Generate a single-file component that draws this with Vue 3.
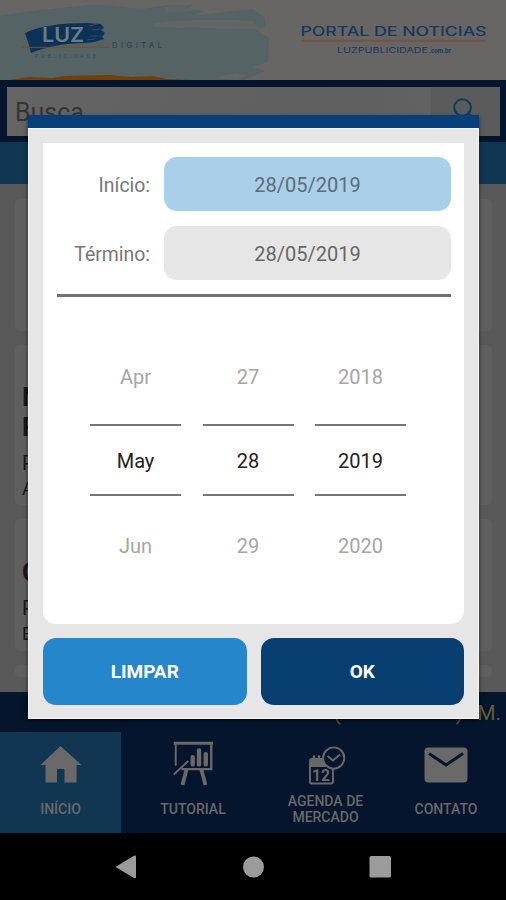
<script setup>
const columns = [
  ['Apr', 'May', 'Jun'],
  ['27', '28', '29'],
  ['2018', '2019', '2020'],
]
</script>

<template>
  <div class="screen">
    <header class="banner">
      <svg width="506" height="80" viewBox="0 0 506 80">
        <rect width="506" height="80" fill="#676665" />
        <path d="M0 16 C30 10 65 8 88 5 C110 4 128 8 143 9 L166 5 L193 5 L187 9 L205 11 L192 16 L231 11 L253 9 L265 18 L266 27 L255 29 L269 38 L268 62 L253 67 L265 71 L244 80 H0Z" fill="#556365" />
        <path d="M152 24 C180 19 224 19 253 21 L260 29 C230 30 203 27 181 28 L154 27Z M214 78 L235 73 L247 75 L238 80Z" fill="#626665" />
        <path d="M165 7 L190 5 L185 8 L204 10 L165 13Z" fill="#5e6565" />
        <path d="M9 80 L29 77 L52 78 L65 76 L110 75 L132 77 L152 76 L166 79 L190 80Z" fill="#733f09" />
        <path d="M25 33 C39 26 62 23 86 23 L101 24 L104 28 L101 30 L105 33 L102 37 L104 39 L95 42 L85 43 C65 43 45 47 31 53 L29 45Z" fill="#0c3357" />
        <path d="M89 26 L98 24 M92 30 L104 29 M90 36 L101 36 M87 40 L95 39" stroke="#38536a" stroke-width=".7" />
        <path d="M22 47.3 H110" stroke="#74502d" stroke-width="1" />
        <text x="42" y="42" textLength="42" lengthAdjust="spacingAndGlyphs" class="luz">LUZ</text>
        <text x="35" y="58" textLength="61" class="publi">PUBLICIDADE</text>
        <text x="112" y="48" textLength="50" class="digital">DIGITAL</text>
        <text x="300.5" y="36" textLength="186" lengthAdjust="spacingAndGlyphs" class="portal">PORTAL DE NOTICIAS</text>
        <path d="M301 40.8 H486" stroke="#76533f" stroke-width="2" />
        <text x="337" y="53" textLength="91" lengthAdjust="spacingAndGlyphs" class="site">LUZPUBLICIDADE</text>
        <text x="429" y="53" textLength="22" lengthAdjust="spacingAndGlyphs" class="site small">.com.br</text>
      </svg>
    </header>
    <div class="search">
      <div class="field">
        <span class="placeholder">Busca</span>
        <span class="go">
          <svg width="28" height="28" viewBox="0 0 28 28" fill="none" stroke="#0c3b5e" stroke-width="2">
            <circle cx="11.5" cy="11.5" r="8.3" /><path d="M17.5 17.5 L25 25" />
          </svg>
        </span>
      </div>
    </div>
    <div class="band"></div>
    <main class="feed">
      <article class="card first"></article>
      <article class="card second"><b>N</b><b>P</b><span>P</span><small>A</small></article>
      <article class="card third"><b>C</b><span>P</span><small>E</small></article>
      <article class="card fourth"></article>
    </main>
    <div class="ticker"><span>(</span><span>)</span><span>M.</span></div>
    <nav class="tabs">
      <div class="tab active">
        <svg width="44" height="48" viewBox="0 0 44 48" fill="#696969">
          <path d="M21.5 8 L42.5 27 H37.5 V44.5 H25.5 V31 H18 V44.5 H6.5 V27 H1.5Z" />
        </svg>
        <span>INÍCIO</span>
      </div>
      <div class="tab">
        <svg width="44" height="50" viewBox="0 0 44 50" fill="none" stroke="#696969" stroke-width="2">
          <path d="M2 5.5 H43" stroke-width="3.2" />
          <path d="M4 6 V29 M2 38 L17 24" stroke-width="2" />
          <path d="M10 32.5 H41 V6" stroke-width="2.4" />
          <path d="M15.5 32 L11 49 M30.5 32 L35 49" stroke-width="4" />
          <path d="M21.7 27.5 V20 M28.3 27.5 V13 M35.3 27.5 V17" stroke-width="4.6" stroke-linecap="round" />
        </svg>
        <span>TUTORIAL</span>
      </div>
      <div class="tab">
        <svg width="44" height="48" viewBox="0 0 44 48" fill="none" stroke="#696969" stroke-width="1.9">
          <path d="M29 31 V43.5 Q29 45.5 27 45.5 H8 Q6 45.5 6 43.5 V23 Q6 21 8 21 H19" />
          <path d="M6 21 H18.5 Q19.5 27 24 29 H6Z" fill="#696969" stroke="none" />
          <path d="M10 22 V18.5 M15 22 V18.5" stroke-width="2.5" stroke-linecap="round" />
          <circle cx="29.7" cy="20" r="10.6" />
          <path d="M23.5 18 L29 22.5 L36 16.5" stroke-width="2" />
          <text x="8" y="43" textLength="18" lengthAdjust="spacingAndGlyphs" class="day">12</text>
        </svg>
        <span>AGENDA DE<br>MERCADO</span>
      </div>
      <div class="tab">
        <svg width="44" height="48" viewBox="0 0 44 48">
          <rect x=".5" y="9.5" width="43" height="35" rx="4" fill="#696969" />
          <path d="M5 15.5 L22 27 L39 15.5" fill="none" stroke="#04152d" stroke-width="3" />
        </svg>
        <span>CONTATO</span>
      </div>
    </nav>
    <footer class="system">
      <svg width="506" height="67" viewBox="0 0 506 67" fill="#9b9b9b">
        <path d="M115.5 34 L134 22.8 Q136 22 136 24 V44 Q136 46 134 45Z" />
        <circle cx="253.5" cy="34" r="10.5" />
        <rect x="369.5" y="23" width="21.5" height="21.5" rx="1.5" />
      </svg>
    </footer>

    <section class="dialog">
      <div class="content">
        <div class="panel">
          <div class="row"><label>Início:</label><div class="date selected">28/05/2019</div></div>
          <div class="row"><label>Término:</label><div class="date">28/05/2019</div></div>
          <div class="rule"></div>
          <div class="picker">
            <div v-for="column in columns" :key="column[1]" class="column">
              <span>{{ column[0] }}</span>
              <span class="current">{{ column[1] }}</span>
              <span>{{ column[2] }}</span>
            </div>
          </div>
        </div>
        <div class="actions">
          <button class="clear">LIMPAR</button>
          <button class="ok">OK</button>
        </div>
      </div>
    </section>
  </div>
</template>

<style>
body { margin: 0; background: #000; }
</style>

<style scoped>
* { box-sizing: border-box; }
.screen { position: relative; width: 506px; height: 900px; overflow: hidden; font-family: Roboto, sans-serif; }
svg { display: block; }
.banner { height: 80px; }
.luz { font: 600 20px Inter, sans-serif; fill: #6e7c87; }
.publi { font: 5px Inter, sans-serif; fill: #344c5d; }
.digital { font: 7.5px Inter, sans-serif; fill: #213d57; }
.portal { font: 500 12.5px Inter, sans-serif; fill: #17375b; }
.site { font: 7.5px Inter, sans-serif; fill: #17375b; }
.small { font-size: 6px; font-weight: 700; }
.search { height: 62px; padding: 7px 6px 6px 7px; background: #04152d; }
.field { height: 49px; display: flex; justify-content: space-between; background: linear-gradient(90deg, #646464, #5f5f5f 70%, #666); }
.placeholder { padding: 12px 0 0 8px; font-size: 25px; line-height: 28px; color: #343434; }
.go { width: 69px; padding: 9px 0 0 20px; background: #5b5b5b; }
.band { height: 42px; background: #103651; }
.feed { height: 508px; padding: 15px 14px 0 15px; background: #595959; overflow: hidden; display: flex; flex-direction: column; gap: 14px; }
.card { flex: none; border-radius: 5px; background: #5f5f5f; padding-left: 7px; display: flex; flex-direction: column; color: #191919; }
.card b { font-size: 26px; line-height: 30px; }
.card span { font-size: 20px; line-height: 25px; }
.card small { font-size: 18px; line-height: 25px; }
.first { height: 132px; }
.second { height: 160px; padding-top: 37px; }
.second span { margin-top: 9px; }
.third { height: 132px; padding-top: 38px; }
.third span { margin-top: 9px; }
.fourth { height: 12px; }
.ticker { height: 40px; padding: 9px 5px 0 0; display: flex; justify-content: flex-end; background: #04152d; color: #625d38; font-size: 21px; line-height: 25px; }
.ticker span:first-child { margin-right: 115px; }
.ticker span:nth-child(2) { margin-right: 14px; }
.tabs { height: 101px; display: grid; grid-template-columns: 121px 144px 121px 120px; background: #04152d; }
.tab { padding-top: 6px; display: flex; flex-direction: column; align-items: center; text-align: center; color: #696969; font-size: 14px; font-weight: 500; line-height: 16px; }
.tab svg { height: 48px; flex: none; overflow: visible; }
.tab span { height: 45px; display: flex; align-items: center; }
.active { background: #103651; }
.day { font: 700 17px Roboto, sans-serif; fill: #696969; stroke: none; }
.system { height: 67px; background: #000; }
.dialog { position: absolute; left: 28px; top: 115px; width: 451px; height: 604px; border-top: 13px solid #063f79; background: #e6e6e6; box-shadow: 0 2px 4px #0009; }
.content { height: 591px; border: 1px solid #f3f3f3; padding: 14px 14px 13px; display: flex; flex-direction: column; gap: 14px; }
.panel { height: 481px; flex: none; padding: 14px 13px 0 14px; border-radius: 0 0 13px 13px; background: #fff; }
.row { height: 54px; display: flex; align-items: center; gap: 14px; margin-bottom: 15px; color: #777; }
.row label { width: 93px; padding-top: 2px; text-align: right; white-space: nowrap; font-size: 19.4px; }
.date { flex: 1; height: 54px; padding-top: 2px; border-radius: 13px; background: #e6e6e6; display: flex; align-items: center; justify-content: center; color: #666; font-size: 20px; }
.date.selected { background: #a9cfe9; color: #5b6d7a; }
.rule { height: 3px; margin-top: -1px; background: #717171; }
.picker { height: 253px; margin: 37px 45px 0 33px; display: flex; justify-content: space-between; }
.column { width: 91px; display: flex; flex-direction: column; align-items: center; font-size: 20px; line-height: 24px; color: #a6a6a6; }
.column span { height: 92px; padding-top: 31px; }
.column .current { width: 91px; height: 73px; padding-top: 23px; margin-top: -1px; border-top: 2px solid #777; border-bottom: 2px solid #777; text-align: center; color: #222; }
.column .current + span { padding-top: 38px; }
.actions { display: grid; grid-template-columns: 1fr 1fr; gap: 14px; }
button { height: 67px; border: 0; border-radius: 13px; color: #fff; font: 700 19px Roboto, sans-serif; padding: 0; }
.clear { background: #2586cb; }
.ok { background: #083f73; }
</style>
